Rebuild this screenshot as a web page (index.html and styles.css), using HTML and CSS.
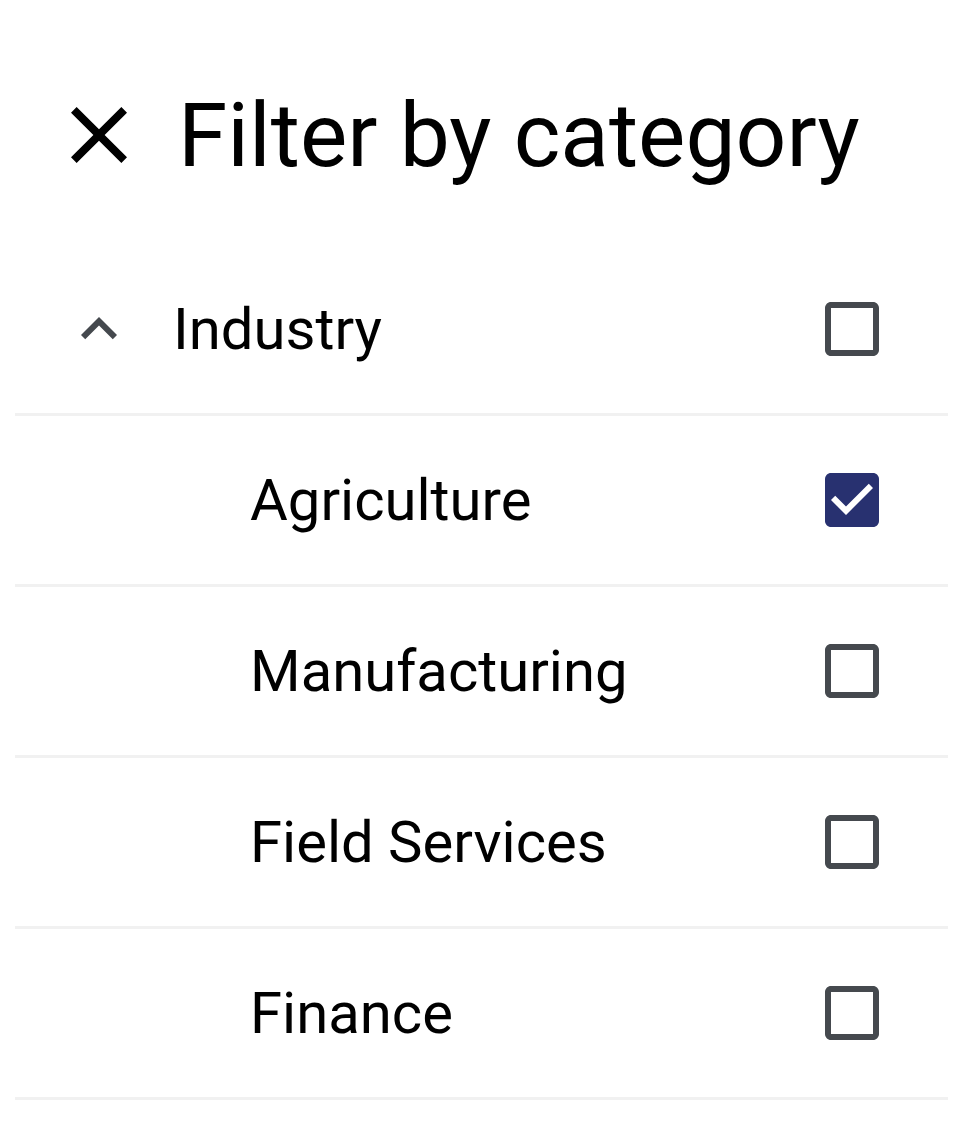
FILE: index.html
```html
<!DOCTYPE html>
<html lang="en">
<head>
<meta charset="utf-8">
<title>Filter by category</title>
<link rel="stylesheet" href="styles.css">
</head>
<body>
<div class="sheet">
  <header class="header">
    <svg class="icon-close" viewBox="0 0 24 24" aria-label="Close"><path d="M19 6.41L17.59 5 12 10.59 6.41 5 5 6.41 10.59 12 5 17.59 6.41 19 12 13.41 17.59 19 19 17.59 13.41 12z"/></svg>
    <h1 class="title">Filter by category</h1>
  </header>
  <ul class="list">
    <li class="row row-group">
      <svg class="icon-chevron" viewBox="0 0 24 24"><path d="M12 8l-6 6 1.41 1.41L12 10.83l4.59 4.58L18 14z"/></svg>
      <span class="label">Industry</span>
      <svg class="checkbox" viewBox="0 0 24 24"><path d="M19 5v14H5V5h14m0-2H5c-1.1 0-2 .9-2 2v14c0 1.1.9 2 2 2h14c1.1 0 2-.9 2-2V5c0-1.1-.9-2-2-2z"/></svg>
    </li>
    <li class="row row-sub">
      <span class="label">Agriculture</span>
      <svg class="checkbox checked" viewBox="0 0 24 24"><path class="box" d="M19 3H5c-1.11 0-2 .9-2 2v14c0 1.1.89 2 2 2h14c1.11 0 2-.9 2-2V5c0-1.1-.89-2-2-2z"/><path class="tick" d="M10 17l-5-5 1.41-1.41L10 14.170l7.590-7.590L19 8l-9 9z"/></svg>
    </li>
    <li class="row row-sub">
      <span class="label">Manufacturing</span>
      <svg class="checkbox" viewBox="0 0 24 24"><path d="M19 5v14H5V5h14m0-2H5c-1.1 0-2 .9-2 2v14c0 1.1.9 2 2 2h14c1.1 0 2-.9 2-2V5c0-1.1-.9-2-2-2z"/></svg>
    </li>
    <li class="row row-sub">
      <span class="label">Field Services</span>
      <svg class="checkbox" viewBox="0 0 24 24"><path d="M19 5v14H5V5h14m0-2H5c-1.1 0-2 .9-2 2v14c0 1.1.9 2 2 2h14c1.1 0 2-.9 2-2V5c0-1.1-.9-2-2-2z"/></svg>
    </li>
    <li class="row row-sub">
      <span class="label">Finance</span>
      <svg class="checkbox" viewBox="0 0 24 24"><path d="M19 5v14H5V5h14m0-2H5c-1.1 0-2 .9-2 2v14c0 1.1.9 2 2 2h14c1.1 0 2-.9 2-2V5c0-1.1-.9-2-2-2z"/></svg>
    </li>
  </ul>
</div>
</body>
</html>
```
FILE: styles.css
```css
html, body {
  margin: 0;
  padding: 0;
  background: #ffffff;
}
body {
  font-family: Roboto, "Liberation Sans", sans-serif;
  color: #000000;
}
.sheet {
  padding: 0 12px 0 15px;
}
.header {
  display: flex;
  align-items: center;
  height: 96px;
  margin-top: 87px;
  padding-left: 36px;
  gap: 31px;
}
.icon-close {
  width: 96px;
  height: 96px;
  flex: none;
  fill: #000000;
}
.title {
  margin: 0;
  font-size: 89.25px;
  font-weight: 400;
  line-height: normal;
  white-space: nowrap;
}
.list {
  list-style: none;
  margin: 62px 0 0 0;
  padding: 0;
}
.row {
  display: flex;
  align-items: center;
  height: 168px;
  padding-right: 60px;
  border-bottom: 3px solid #f1f1f1;
}
.row-group {
  padding-left: 48px;
  gap: 38px;
}
.row-sub {
  padding-left: 235px;
}
.icon-chevron {
  width: 72px;
  height: 72px;
  flex: none;
  fill: #45494e;
}
.label {
  flex: 1;
  font-size: 58px;
  line-height: normal;
  white-space: nowrap;
}
.checkbox {
  width: 72px;
  height: 72px;
  flex: none;
  fill: #45494e;
}
.checkbox.checked .box {
  fill: #283170;
}
.checkbox.checked .tick {
  fill: #ffffff;
}
```
